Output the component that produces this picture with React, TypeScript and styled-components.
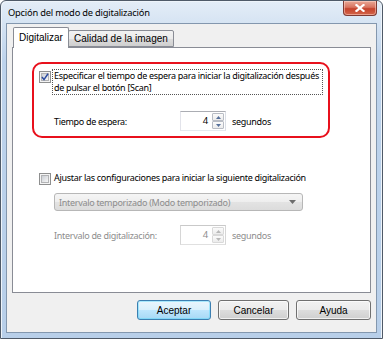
import styled, { createGlobalStyle } from "styled-components";

const GlobalStyle = createGlobalStyle`
  html, body {
    margin: 0;
    padding: 0;
    background: #ffffff;
  }
  * {
    box-sizing: border-box;
  }
`;

const UI_FONT = `"Noto Sans", "Open Sans", sans-serif`;
const CLASSIC_FONT = `"Liberation Sans", Arial, sans-serif`;

const Window = styled.div`
  width: 383px;
  height: 339px;
  display: flex;
  flex-direction: column;
  border: 1px solid #4f5a68;
  border-radius: 6px 6px 0 0;
  padding: 0 5px 5px 5px;
  background: linear-gradient(180deg, #e4edf7 0px, #d6e4f3 22px, #bdd3ec 60px, #b8cfe9 100%);
  box-shadow: inset 1px 1px 0 #eef4fa, inset -1px 0 0 #eef4fa;
  font-family: ${UI_FONT};
`;

const TitleBar = styled.div`
  height: 22px;
  display: flex;
  align-items: flex-start;
  justify-content: space-between;
`;

const Title = styled.div`
  padding: 5px 0 0 2px;
  font-size: 9.3px;
  letter-spacing: -0.2px;
  color: #000;
  line-height: 13px;
`;

const CloseButton = styled.div`
  width: 34px;
  height: 15px;
  border: 1px solid #7e3a33;
  border-top: none;
  border-radius: 0 0 4px 4px;
  background: linear-gradient(180deg, #e9a896 0%, #d8735f 45%, #c5432c 55%, #d3654a 100%);
  box-shadow: inset 0 0 0 1px rgba(255, 220, 210, 0.5);
  display: flex;
  align-items: center;
  justify-content: center;
`;

const Client = styled.div`
  flex: 1;
  display: flex;
  flex-direction: column;
  background: #f0f0f0;
  border: 1px solid #8397ae;
  padding: 3px 5px 0 5px;
`;

const TabStrip = styled.div`
  display: flex;
  align-items: flex-end;
  height: 20px;
  padding-left: 1px;
  position: relative;
  z-index: 1;
`;

const Tab = styled.div<{ $active?: boolean }>`
  font-family: ${CLASSIC_FONT};
  font-size: 10px;
  color: #000;
  border: 1px solid #898c95;
  border-bottom: ${(p) => (p.$active ? "none" : "1px solid #898c95")};
  border-radius: 2px 2px 0 0;
  height: ${(p) => (p.$active ? "21px" : "17px")};
  margin-bottom: ${(p) => (p.$active ? "-1px" : "0")};
  margin-left: ${(p) => (p.$active ? "0" : "-1px")};
  padding: ${(p) => (p.$active ? "3px 5px 0 5px" : "1px 5px 0 5px")};
  background: ${(p) =>
    p.$active ? "#ffffff" : "linear-gradient(180deg, #f2f2f2 0%, #ebebeb 50%, #dddddd 51%, #cfcfcf 100%)"};
  line-height: 14px;
  white-space: nowrap;
`;

const Panel = styled.div`
  height: 246px;
  background: #ffffff;
  border: 1px solid #898c95;
  display: flex;
  flex-direction: column;
  padding: 14px 0 0 19px;
  font-size: 9px;
  letter-spacing: -0.3px;
`;

const Highlight = styled.div`
  width: 298px;
  height: 76px;
  border: 2px solid #e8101c;
  border-radius: 10px;
  display: flex;
  flex-direction: column;
  padding: 5px 0 0 5px;
`;

const CheckRow = styled.div<{ $indent?: number; $top?: number }>`
  display: flex;
  align-items: flex-start;
  margin-left: ${(p) => p.$indent ?? 0}px;
  margin-top: ${(p) => p.$top ?? 0}px;
`;

const Box = styled.div`
  width: 12px;
  height: 12px;
  flex: none;
  margin-top: 2px;
  border: 1px solid #8e8f8f;
  background: #f4f4f4;
  display: flex;
  align-items: center;
  justify-content: center;
  padding: 1px;
`;

const BoxInner = styled.div`
  width: 100%;
  height: 100%;
  border: 1px solid #b2b3b5;
  background: linear-gradient(135deg, #cbcfd5 0%, #f6f6f6 100%);
  display: flex;
  align-items: center;
  justify-content: center;
`;

const Label = styled.div<{ $focus?: boolean }>`
  color: #000;
  margin-left: 1px;
  border: 1px dotted ${(p) => (p.$focus ? "#555" : "transparent")};
  padding: 0 1px;
  line-height: 12px;
  width: ${(p) => (p.$focus ? "271px" : "auto")};
  white-space: ${(p) => (p.$focus ? "normal" : "nowrap")};
`;

const FieldRow = styled.div<{ $top: number; $indent: number }>`
  display: flex;
  align-items: center;
  margin-top: ${(p) => p.$top}px;
  margin-left: ${(p) => p.$indent}px;
  height: 20px;
`;

const FieldLabel = styled.div<{ $disabled?: boolean }>`
  width: 126px;
  color: ${(p) => (p.$disabled ? "#8d8d8d" : "#000")};
  white-space: nowrap;
`;

const Spin = styled.div<{ $disabled?: boolean }>`
  width: 46px;
  height: 20px;
  display: flex;
  border: 1px solid ${(p) => (p.$disabled ? "#c9c9c9" : "#abadb3")};
  border-bottom-color: ${(p) => (p.$disabled ? "#e0e0e0" : "#e3e9ef")};
  border-left-color: ${(p) => (p.$disabled ? "#d6d6d6" : "#e2e3ea")};
  border-right-color: ${(p) => (p.$disabled ? "#d6d6d6" : "#dbdfe6")};
  background: #fff;
  padding: 1px;
`;

const SpinValue = styled.div<{ $disabled?: boolean }>`
  flex: 1;
  text-align: right;
  padding-right: 4px;
  line-height: 16px;
  font-size: 9.5px;
  color: ${(p) => (p.$disabled ? "#8d8d8d" : "#000")};
`;

const SpinButtons = styled.div`
  width: 12px;
  display: flex;
  flex-direction: column;
`;

const SpinButton = styled.div<{ $disabled?: boolean }>`
  flex: 1;
  border: 1px solid ${(p) => (p.$disabled ? "#d9d9d9" : "#b8bcc4")};
  border-radius: 1px;
  background: linear-gradient(180deg, #fbfbfb 0%, #ececec 100%);
  display: flex;
  align-items: center;
  justify-content: center;
`;

const Unit = styled.div<{ $disabled?: boolean }>`
  margin-left: 6px;
  color: ${(p) => (p.$disabled ? "#8d8d8d" : "#000")};
`;

const Combo = styled.div`
  width: 249px;
  height: 18px;
  margin: 8px 0 0 22px;
  border: 1px solid #b7b7b7;
  border-radius: 3px;
  background: linear-gradient(180deg, #f5f5f5 0%, #eeeeee 50%, #e3e3e3 51%, #dcdcdc 100%);
  display: flex;
  align-items: center;
  justify-content: space-between;
  padding: 0 6px 0 4px;
  color: #8d8d8d;
`;

const Buttons = styled.div`
  display: flex;
  justify-content: flex-end;
  gap: 7px;
  margin-top: 7px;
`;

const Button = styled.div<{ $default?: boolean; $w: number }>`
  width: ${(p) => p.$w}px;
  height: 20px;
  border: 1px solid ${(p) => (p.$default ? "#3c7fb1" : "#707070")};
  border-radius: 3px;
  background: ${(p) =>
    p.$default
      ? "linear-gradient(180deg, #eaf6fd 0%, #d9f0fc 50%, #bee6fd 51%, #a7d9f5 100%)"
      : "linear-gradient(180deg, #f2f2f2 0%, #ebebeb 50%, #dddddd 51%, #cfcfcf 100%)"};
  box-shadow: ${(p) =>
    p.$default ? "inset 0 0 0 1px #48d5fb66" : "inset 0 0 0 1px rgba(255,255,255,0.7)"};
  font-family: ${CLASSIC_FONT};
  font-size: 10px;
  display: flex;
  align-items: center;
  justify-content: center;
  color: #000;
`;

const Arrow = ({ up, color, w = 5, h = 3 }: { up?: boolean; color: string; w?: number; h?: number }) => (
  <svg width={w} height={h} viewBox={`0 0 ${w} ${h}`} style={{ display: "block" }}>
    <path d={up ? `M${w / 2} 0 L${w} ${h} L0 ${h} Z` : `M0 0 L${w} 0 L${w / 2} ${h} Z`} fill={color} />
  </svg>
);

const Spinner = ({ value, disabled }: { value: string; disabled?: boolean }) => (
  <Spin $disabled={disabled}>
    <SpinValue $disabled={disabled}>{value}</SpinValue>
    <SpinButtons>
      <SpinButton $disabled={disabled}>
        <Arrow up color={disabled ? "#b8b8b8" : "#56709a"} />
      </SpinButton>
      <SpinButton $disabled={disabled}>
        <Arrow color={disabled ? "#b8b8b8" : "#56709a"} />
      </SpinButton>
    </SpinButtons>
  </Spin>
);

const CheckBox = ({ checked }: { checked?: boolean }) => (
  <Box>
    <BoxInner>
      {checked && (
        <svg width="8" height="8" viewBox="0 0 8 8" style={{ display: "block", margin: "-1px" }}>
          <path d="M1 4 L3 6.6 L7 0.8" stroke="#2a4aa0" strokeWidth="1.5" fill="none" />
        </svg>
      )}
    </BoxInner>
  </Box>
);

export default function App() {
  return (
    <>
      <GlobalStyle />
      <Window>
        <TitleBar>
          <Title>Opción del modo de digitalización</Title>
          <CloseButton>
            <svg width="10" height="8" viewBox="0 0 10 8">
              <path d="M1.5 1 L8.5 7 M8.5 1 L1.5 7" stroke="#ffffff" strokeWidth="2.2" strokeLinecap="square" />
            </svg>
          </CloseButton>
        </TitleBar>
        <Client>
          <TabStrip>
            <Tab $active>Digitalizar</Tab>
            <Tab>Calidad de la imagen</Tab>
          </TabStrip>
          <Panel>
            <Highlight>
              <CheckRow>
                <CheckBox checked />
                <Label $focus>
                  Especificar el tiempo de espera para iniciar la digitalización después de pulsar el botón [Scan]
                </Label>
              </CheckRow>
              <FieldRow $top={16} $indent={15}>
                <FieldLabel>Tiempo de espera:</FieldLabel>
                <Spinner value="4" />
                <Unit>segundos</Unit>
              </FieldRow>
            </Highlight>
            <CheckRow $indent={7} $top={33}>
              <CheckBox />
              <Label>Ajustar las configuraciones para iniciar la siguiente digitalización</Label>
            </CheckRow>
            <Combo>
              <span>Intervalo temporizado (Modo temporizado)</span>
              <Arrow color="#6d6d6d" w={7} h={4} />
            </Combo>
            <FieldRow $top={14} $indent={22}>
              <FieldLabel $disabled>Intervalo de digitalización:</FieldLabel>
              <Spinner value="4" disabled />
              <Unit $disabled>segundos</Unit>
            </FieldRow>
          </Panel>
          <Buttons>
            <Button $default $w={74}>Aceptar</Button>
            <Button $w={71}>Cancelar</Button>
            <Button $w={75}>Ayuda</Button>
          </Buttons>
        </Client>
      </Window>
    </>
  );
}
